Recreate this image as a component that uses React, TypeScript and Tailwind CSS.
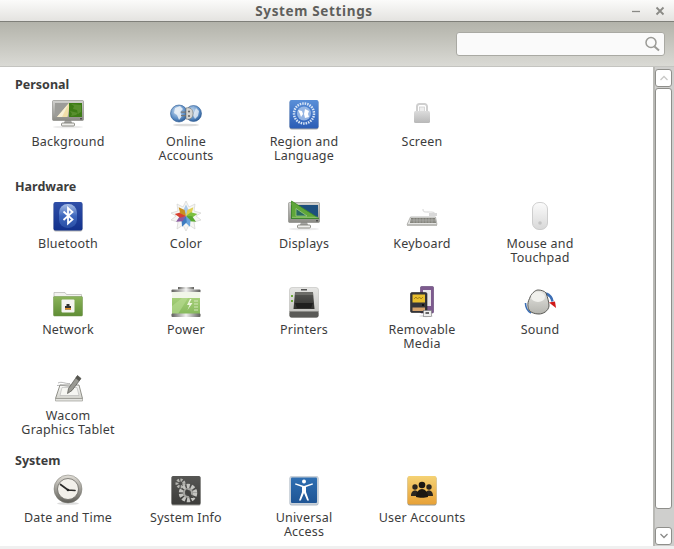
import { ReactNode } from "react";

const Monitor = ({ id, children }: { id: string; children: ReactNode }) => (
  <svg width="32" height="32" viewBox="0 0 32 32">
    <defs>
      <linearGradient id={id} x1="0" y1="0" x2="0" y2="1">
        <stop offset="0" stopColor="#d2d2cf" />
        <stop offset="1" stopColor="#8a8a84" />
      </linearGradient>
    </defs>
    <ellipse cx="16" cy="29" rx="15" ry="1.300" fill="#ececec" />
    <path d="M13 22h6l1 3h-8z" fill="#a5a5a2" />
    <rect x="9.500" y="25" width="13" height="3" rx="1" fill="#eeeeec" stroke="#77776f" strokeWidth="0.8" />
    <rect x="0.500" y="2.500" width="31" height="20" rx="1" fill={`url(#${id})`} stroke="#85857f" strokeWidth="0.6" />
    {children}
    <rect x="28" y="20.300" width="2" height="1" fill="#333" />
  </svg>
);

const BackgroundIcon = () => (
  <Monitor id="bgm">
    <rect x="3" y="5" width="14" height="14" fill="#9c9c98" />
    <rect x="17" y="5" width="13" height="14" fill="#3d7c16" />
    <path d="M19 6l3 2-1 3 4 1 1 4 3-2V7zM18 13l2 3-1 2 5-1 2-2z" fill="#588f2e" />
    <path d="M17 5c.300 5-.300 10-1.500 14H5z" fill="#f1dfa8" />
    <path d="M17 5L5 19h5z" fill="#f8f0d4" />
  </Monitor>
);

const OnlineIcon = () => (
  <svg width="32" height="32" viewBox="0 0 32 32">
    <defs>
      <radialGradient id="oa1" cx="0.4" cy="0.35" r="0.75">
        <stop offset="0" stopColor="#cfe0f2" />
        <stop offset="0.6" stopColor="#5e8fc6" />
        <stop offset="1" stopColor="#1d4c86" />
      </radialGradient>
    </defs>
    <ellipse cx="16" cy="27" rx="13" ry="1.300" fill="#dcdcdc" />
    <circle cx="9" cy="15.500" r="8.500" fill="url(#oa1)" stroke="#2c5a94" strokeWidth="0.6" />
    <circle cx="23.500" cy="15.500" r="8" fill="url(#oa1)" stroke="#2c5a94" strokeWidth="0.6" />
    <path d="M5 10l5-2 3 3-3 3 2 4-3 4-2-5-3-2z" fill="#eef3f8" opacity="0.85" />
    <path d="M26 10l3 3-1 5-3 3-2-4z" fill="#eef3f8" opacity="0.75" />
    <path d="M11 13.500h6v1.300h-6zM11 17h6v1.300h-6z" fill="#777" />
    <path d="M16 10c4-1 7 1 7 5.500s-3 6.500-7 5.500z" fill="#d5d5d2" stroke="#6f6f6c" strokeWidth="0.6" />
    <circle cx="19" cy="13.500" r="1.100" fill="#666" />
    <circle cx="19" cy="18" r="1.100" fill="#666" />
  </svg>
);

const RegionIcon = () => (
  <svg width="32" height="32" viewBox="0 0 32 32">
    <defs>
      <linearGradient id="rg1" x1="0" y1="0" x2="0" y2="1">
        <stop offset="0" stopColor="#5a8fd8" />
        <stop offset="1" stopColor="#2a5cb5" />
      </linearGradient>
    </defs>
    <rect x="1.500" y="2.500" width="29" height="29" rx="2" fill="#a8a8a8" />
    <rect x="1.500" y="2" width="29" height="28.500" rx="2" fill="url(#rg1)" />
    <circle cx="16" cy="15.500" r="10" fill="none" stroke="#d8e5f6" strokeWidth="2.500" strokeDasharray="1.500 1" />
    <circle cx="16" cy="15.500" r="7" fill="#a9c4ea" opacity="0.8" />
    <path d="M10 12l4 1 1 3-2 3-1-3zM17 11l4 2-1 3 1 3-4 1-1-4z" fill="#fff" />
  </svg>
);

const ScreenIcon = () => (
  <svg width="32" height="32" viewBox="0 0 32 32">
    <defs>
      <linearGradient id="sc1" x1="0" y1="0" x2="0" y2="1">
        <stop offset="0" stopColor="#dcdcdc" />
        <stop offset="1" stopColor="#b8b8b8" />
      </linearGradient>
    </defs>
    <path d="M11 14V8.500a2.500 2.500 0 0 1 2.500-2.500h5A2.500 2.500 0 0 1 21 8.500V14" fill="none" stroke="#cfcfcf" strokeWidth="2" />
    <rect x="13.500" y="9" width="5" height="4.500" fill="#ededed" stroke="#cfcfcf" strokeWidth="0.8" />
    <rect x="8" y="13" width="16" height="12" rx="1.500" fill="url(#sc1)" />
  </svg>
);

const BluetoothIcon = () => (
  <svg width="32" height="32" viewBox="0 0 32 32">
    <defs>
      <linearGradient id="bt1" x1="0" y1="0" x2="0" y2="1">
        <stop offset="0" stopColor="#2f4fa8" />
        <stop offset="1" stopColor="#12318c" />
      </linearGradient>
      <linearGradient id="bt2" x1="0" y1="0" x2="0" y2="1">
        <stop offset="0" stopColor="#a9bfe6" />
        <stop offset="0.5" stopColor="#3d66bd" />
        <stop offset="1" stopColor="#2a4fa5" />
      </linearGradient>
    </defs>
    <rect x="1.500" y="2.500" width="29" height="29" rx="2" fill="#b5b5b5" />
    <rect x="1.500" y="2" width="29" height="28.500" rx="2" fill="url(#bt1)" />
    <rect x="7" y="4" width="18" height="24" rx="8.500" fill="url(#bt2)" />
    <path d="M11.500 11.500l9 8-4.500 4V8l4.500 4-9 8" fill="none" stroke="#fff" strokeWidth="1.800" />
  </svg>
);

const ColorIcon = () => {
  // petals clockwise from the top
  const colors = ["#a9c8e8", "#e0d050", "#7cc040", "#58a830", "#6aa5dc", "#3e7cc0", "#8a5aa0", "#d84030", "#c89020"];
  return (
    <svg width="32" height="32" viewBox="0 0 32 32">
      <path
        d="M16 1l3 6 6-3-1 7 7 2-5 3 5 4-7 2 1 7-6-4-3 6-3-6-6 4 1-7-7-2 5-4-5-3 7-2-1-7 6 3z"
        fill="#f6f6f4"
        stroke="#cfcfcb"
        strokeWidth="0.6"
      />
      {colors.map((c, i) => (
        <path key={i} d="M16 16l-2.800-5.500L16 4.500l2.800 6z" fill={c} transform={`rotate(${i * 40} 16 16)`} />
      ))}
    </svg>
  );
};

const DisplaysIcon = () => (
  <Monitor id="dpm">
    <rect x="3" y="5" width="27" height="14" fill="#1d4f7d" />
    <path d="M3.500 1L31 18.500H3.500z" fill="#5fa63a" stroke="#3e8a22" strokeWidth="0.8" />
    <path d="M8 8.500l11 7.500H8z" fill="#2a6a60" stroke="#a9d48a" strokeWidth="0.7" />
    <path d="M4 17.300h26" stroke="#bfe0a0" strokeWidth="0.5" />
  </Monitor>
);

const KeyboardIcon = () => (
  <svg width="32" height="32" viewBox="0 0 32 32">
    <path d="M17 9c0 3 1 3 5 3s7 0 7 2" fill="none" stroke="#c9c9c9" strokeWidth="0.8" />
    <path d="M23 13h8v3h-8z" fill="#d8d8d8" />
    <path d="M4.500 17h25l1.500 7.500H1z" fill="#e4e4e2" stroke="#8e8e8a" strokeWidth="0.6" />
    <path d="M5 18h24l1 5H4z" fill="#77776f" />
    <path d="M5 19.300h24M4.700 20.600h24.600M4.400 21.900h25.200M8 18v5M11 18v5M14 18v5M17 18v5M20 18v5M23 18v5M26 18v5" stroke="#c8c8c4" strokeWidth="0.45" />
    <rect x="1" y="24.500" width="30" height="1.500" fill="#bcbcb8" />
  </svg>
);

const MouseIcon = () => (
  <svg width="32" height="32" viewBox="0 0 32 32">
    <defs>
      <linearGradient id="ms1" x1="0" y1="0" x2="0" y2="1">
        <stop offset="0" stopColor="#fbfbfb" />
        <stop offset="1" stopColor="#d8d8d8" />
      </linearGradient>
    </defs>
    <rect x="8.500" y="2.500" width="15" height="27" rx="6.500" fill="url(#ms1)" stroke="#c4c4c4" strokeWidth="0.8" />
    <circle cx="16" cy="23" r="1.800" fill="#c4c4c4" />
  </svg>
);

const NetworkIcon = () => (
  <svg width="32" height="32" viewBox="0 0 32 32">
    <defs>
      <linearGradient id="nw1" x1="0" y1="0" x2="0" y2="1">
        <stop offset="0" stopColor="#8bb45a" />
        <stop offset="1" stopColor="#5f8d35" />
      </linearGradient>
    </defs>
    <path d="M2 12V6.500h11l1.500 2h15V12z" fill="#f2f2ef" stroke="#b5b5b0" strokeWidth="0.7" />
    <rect x="1.500" y="10.500" width="29" height="19.500" rx="1" fill="url(#nw1)" stroke="#6b8f45" strokeWidth="0.5" />
    <rect x="9.500" y="13.500" width="13" height="13" rx="1" fill="#f4f4f0" />
    <path d="M13 20h6v3.500h-6zM14.500 18h3v2h-3z" fill="#333" />
    <rect x="13" y="22" width="6" height="1.500" fill="#e28b1e" />
  </svg>
);

const PowerIcon = () => (
  <svg width="32" height="32" viewBox="0 0 32 32">
    <defs>
      <linearGradient id="pw1" x1="0" y1="0" x2="0" y2="1">
        <stop offset="0" stopColor="#a5cf78" />
        <stop offset="1" stopColor="#86b95c" />
      </linearGradient>
      <linearGradient id="pw2" x1="0" y1="0" x2="1" y2="0">
        <stop offset="0" stopColor="#5f5f5c" />
        <stop offset="0.5" stopColor="#f0f0ee" />
        <stop offset="1" stopColor="#5f5f5c" />
      </linearGradient>
    </defs>
    <rect x="8" y="1" width="16" height="2.500" fill="url(#pw2)" />
    <rect x="1.500" y="3.500" width="29" height="3" rx="1" fill="url(#pw2)" />
    <rect x="2" y="6" width="28" height="22" fill="#f1f6e8" />
    <rect x="2" y="12" width="28" height="16" fill="url(#pw1)" />
    <path d="M2 20l10-8h6L8 28H2z" fill="#b9dc92" opacity="0.6" />
    <path d="M20 13l-3 6h2.500l-2 5 5-7h-3l2-4z" fill="#eef6df" />
    <path d="M24 15h4M24 18h4M24 21h4M24 24h4" stroke="#e4f0d0" strokeWidth="0.8" />
    <rect x="1.500" y="27.500" width="29" height="3.500" rx="1" fill="url(#pw2)" />
  </svg>
);

const PrintersIcon = () => (
  <svg width="32" height="32" viewBox="0 0 32 32">
    <defs>
      <linearGradient id="pr1" x1="0" y1="0" x2="0" y2="1">
        <stop offset="0" stopColor="#e6e6e4" />
        <stop offset="1" stopColor="#bdbdb9" />
      </linearGradient>
      <linearGradient id="pr2" x1="0" y1="0" x2="0" y2="1">
        <stop offset="0" stopColor="#575754" />
        <stop offset="1" stopColor="#2f2f2d" />
      </linearGradient>
    </defs>
    <rect x="1.500" y="1.500" width="29" height="30" rx="2.500" fill="url(#pr1)" stroke="#b4b4b0" strokeWidth="0.5" />
    <rect x="13" y="3" width="6" height="1.500" fill="#555" />
    <path d="M7 6h18l1.500 17h-21z" fill="url(#pr2)" />
    <path d="M7 6h18v3H7z" fill="#6c6c68" />
    <path d="M7 17h18l-2 5H9z" fill="#1f1f1e" />
    <rect x="3" y="9" width="2" height="2" fill="#6ea93a" />
    <rect x="3" y="14" width="2" height="2" fill="#6ea93a" />
    <rect x="1.500" y="25" width="29" height="6.500" rx="2" fill="#5a5a57" />
    <rect x="1.500" y="25" width="29" height="1" fill="#8a8a86" />
  </svg>
);

const RemovableIcon = () => (
  <svg width="32" height="32" viewBox="0 0 32 32">
    <ellipse cx="20" cy="30" rx="7" ry="1.200" fill="#ddd" />
    <rect x="14.500" y="0.500" width="13" height="26.500" rx="1" fill="#7d5a8e" stroke="#5d4070" strokeWidth="0.6" />
    <rect x="17" y="4" width="8" height="16" fill="#e8e4e8" />
    <rect x="4.500" y="6.500" width="16.500" height="20" rx="1.500" fill="#34343a" stroke="#222" strokeWidth="0.6" />
    <rect x="6.500" y="8.500" width="12.500" height="8" fill="#e9bf2e" />
    <path d="M8 13l2-2 1.500 2 2-2 1.500 2 2-2" stroke="#8a6a10" strokeWidth="0.7" fill="none" />
    <rect x="6.500" y="21.500" width="12.500" height="3.500" fill="#d4a26c" />
    <rect x="16" y="18" width="2" height="2" fill="#111" />
    <rect x="17.500" y="24.500" width="8" height="6" fill="#efefef" stroke="#777" strokeWidth="0.6" />
    <rect x="19.500" y="26" width="3.500" height="2" fill="#666" />
  </svg>
);

const SoundIcon = () => (
  <svg width="32" height="32" viewBox="0 0 32 32">
    <defs>
      <linearGradient id="sd1" x1="0" y1="0" x2="0" y2="1">
        <stop offset="0" stopColor="#e6e6e2" />
        <stop offset="1" stopColor="#b4b4ae" />
      </linearGradient>
    </defs>
    <path d="M1.500 17C1.500 22 3.500 25 7 27" fill="none" stroke="#3c6eb4" strokeWidth="1.600" />
    <path d="M22 7.500c3.500 1.500 6 4.500 6.500 8" fill="none" stroke="#3c6eb4" strokeWidth="2.500" />
    <path d="M25 16.500l6-1 1 6.500z" fill="#d01818" />
    <path d="M5.500 12.500C7 8 11 4 14 4s6.500 1 8 3c1.500 4 3 9 3 13-.5 5-6 8-10 8-5 0-10.500-2-11-7-.5-3 .2-6 1.500-8.500z" fill="url(#sd1)" stroke="#4a4a45" strokeWidth="0.9" />
    <ellipse cx="14" cy="11" rx="7" ry="5" fill="#f0f0ec" />
  </svg>
);

const WacomIcon = () => (
  <svg width="32" height="32" viewBox="0 0 32 32">
    <defs>
      <linearGradient id="wc1" x1="0" y1="0" x2="0" y2="1">
        <stop offset="0" stopColor="#fbfbf9" />
        <stop offset="1" stopColor="#d2d2cc" />
      </linearGradient>
    </defs>
    <path d="M8 13h19l3.500 13.500h-27z" fill="url(#wc1)" stroke="#77776f" strokeWidth="0.8" />
    <path d="M3.500 26.500h27v2.500h-27z" fill="#e4e4e0" stroke="#8f8f88" strokeWidth="0.6" />
    <path d="M10 15.500h15l2 8H8z" fill="#f6f6f2" stroke="#aaa" strokeWidth="0.5" />
    <path d="M6 11c4-2 7 1 12 .5M5 13.500c5-1 9 1 13 1" fill="none" stroke="#888" strokeWidth="0.6" />
    <path d="M25.500 3.500l3.500 3-9 12-4.500 3 1-5z" fill="#9a9a94" stroke="#55554f" strokeWidth="0.7" />
    <path d="M25.500 3.500l3.500 3-2 2.500-3.500-3z" fill="#55554f" />
  </svg>
);

const ClockIcon = () => (
  <svg width="32" height="32" viewBox="0 0 32 32">
    <defs>
      <linearGradient id="ck1" x1="0" y1="0" x2="0" y2="1">
        <stop offset="0" stopColor="#e2dfd8" />
        <stop offset="1" stopColor="#5f5e58" />
      </linearGradient>
    </defs>
    <ellipse cx="16" cy="29.500" rx="11" ry="1.300" fill="#ddd" />
    <circle cx="16" cy="15" r="14" fill="url(#ck1)" stroke="#77766f" strokeWidth="0.5" />
    <circle cx="16" cy="15" r="10.500" fill="#f2f0ea" stroke="#6b6a64" strokeWidth="0.8" />
    <path d="M16 16L8.500 10.500M16 16l7 .5" stroke="#2c2c2a" strokeWidth="1.700" strokeLinecap="round" />
    <circle cx="16" cy="16" r="1.300" fill="#222" />
  </svg>
);

const SystemInfoIcon = () => (
  <svg width="32" height="32" viewBox="0 0 32 32">
    <defs>
      <linearGradient id="si1" x1="0" y1="0" x2="0" y2="1">
        <stop offset="0" stopColor="#565654" />
        <stop offset="1" stopColor="#3c3c3a" />
      </linearGradient>
    </defs>
    <rect x="1.500" y="2.500" width="29" height="29" rx="1.500" fill="#9a9a96" />
    <rect x="1.500" y="2" width="29" height="28.500" rx="1.500" fill="url(#si1)" />
    <circle cx="18" cy="19" r="7" fill="none" stroke="#c4c4c0" strokeWidth="4.500" strokeDasharray="3 1.500" />
    <circle cx="18" cy="19" r="5" fill="#a5a5a1" />
    <circle cx="18" cy="19" r="3" fill="#4a4a48" />
    <circle cx="10.500" cy="9.500" r="3.500" fill="none" stroke="#b5b5b0" strokeWidth="3" strokeDasharray="2 1.200" />
    <path d="M17 15l7 9h-4l-5-7z" fill="#444442" />
  </svg>
);

const UniversalIcon = () => (
  <svg width="32" height="32" viewBox="0 0 32 32">
    <defs>
      <linearGradient id="ua1" x1="0" y1="0" x2="0" y2="1">
        <stop offset="0" stopColor="#2f6fb2" />
        <stop offset="1" stopColor="#1f5595" />
      </linearGradient>
    </defs>
    <rect x="1.500" y="2.500" width="29" height="29" rx="2" fill="#b0bac6" />
    <rect x="1.500" y="2" width="29" height="28.500" rx="2" fill="#c8d0d8" />
    <rect x="3" y="3.500" width="26" height="25.500" rx="1" fill="url(#ua1)" />
    <circle cx="16" cy="7.500" r="2" fill="#fff" />
    <path d="M7 10.500l7 2.500v5l-3 8.500h1.800L16 19l3.200 7.500H21l-3-8.500v-5l7-2.500-.5-1.300L16 12 7.500 9.200z" fill="#fff" />
  </svg>
);

const UsersIcon = () => (
  <svg width="32" height="32" viewBox="0 0 32 32">
    <defs>
      <linearGradient id="us1" x1="0" y1="0" x2="0" y2="1">
        <stop offset="0" stopColor="#f5d274" />
        <stop offset="1" stopColor="#e7a137" />
      </linearGradient>
    </defs>
    <rect x="1.500" y="2.500" width="29" height="29" rx="2" fill="#9a9a92" />
    <rect x="1.500" y="2" width="29" height="28.500" rx="2" fill="url(#us1)" />
    <circle cx="9" cy="13" r="2.700" fill="#2a2620" />
    <circle cx="23" cy="13" r="2.700" fill="#2a2620" />
    <path d="M5 22c0-4 2-5.500 4-5.500s4 1.500 4 5.500zM19 22c0-4 2-5.500 4-5.500s4 1.500 4 5.500z" fill="#2a2620" />
    <circle cx="16" cy="11" r="3.300" fill="#1a1712" />
    <path d="M10 23c0-5 3-8 6-8s6 3 6 8c-3 1-9 1-12 0z" fill="#1a1712" />
  </svg>
);

type Item = { icon: ReactNode; label: string };

const sections: { title: string; items: Item[] }[] = [
  {
    title: "Personal",
    items: [
      { icon: <BackgroundIcon />, label: "Background" },
      { icon: <OnlineIcon />, label: "Online\nAccounts" },
      { icon: <RegionIcon />, label: "Region and\nLanguage" },
      { icon: <ScreenIcon />, label: "Screen" },
    ],
  },
  {
    title: "Hardware",
    items: [
      { icon: <BluetoothIcon />, label: "Bluetooth" },
      { icon: <ColorIcon />, label: "Color" },
      { icon: <DisplaysIcon />, label: "Displays" },
      { icon: <KeyboardIcon />, label: "Keyboard" },
      { icon: <MouseIcon />, label: "Mouse and\nTouchpad" },
      { icon: <NetworkIcon />, label: "Network" },
      { icon: <PowerIcon />, label: "Power" },
      { icon: <PrintersIcon />, label: "Printers" },
      { icon: <RemovableIcon />, label: "Removable\nMedia" },
      { icon: <SoundIcon />, label: "Sound" },
      { icon: <WacomIcon />, label: "Wacom\nGraphics Tablet" },
    ],
  },
  {
    title: "System",
    items: [
      { icon: <ClockIcon />, label: "Date and Time" },
      { icon: <SystemInfoIcon />, label: "System Info" },
      { icon: <UniversalIcon />, label: "Universal\nAccess" },
      { icon: <UsersIcon />, label: "User Accounts" },
    ],
  },
];

export default function App() {
  return (
    <div className="flex h-[549px] w-[674px] flex-col overflow-hidden bg-[#f2f1f0] font-['Noto_Sans',sans-serif] text-[12.5px] leading-[14px] text-[#3c3c3c]">
      {/* title bar */}
      <div className="flex h-[22px] shrink-0 items-center border-b border-[#7f7f79] bg-gradient-to-b from-[#fbfbfa] to-[#e4e3e0]">
        <div className="flex-1 text-center text-[13.5px] font-bold tracking-[0.65px] text-[#5f5f5c]">
          System Settings
        </div>
        <div className="flex w-[46px] items-center gap-[14px] pl-[3px]">
          <svg width="10" height="10" viewBox="0 0 10 10">
            <path d="M1 5.500h8" stroke="#8a8a86" strokeWidth="1.300" />
          </svg>
          <svg width="10" height="10" viewBox="0 0 10 10">
            <path d="M1.500 1.500l7 7M8.500 1.500l-7 7" stroke="#8a8a86" strokeWidth="1.800" />
          </svg>
        </div>
      </div>

      {/* toolbar */}
      <div className="flex h-[45px] shrink-0 items-center justify-end border-b border-[#c4c4c0] bg-gradient-to-b from-[#b3b3aa] to-[#dadad5] pr-[9px]">
        <div className="flex h-[24px] w-[209px] items-center justify-end rounded-[3px] border border-[#a9a9a3] bg-[#fafafa] pr-[3px]">
          <svg width="18" height="18" viewBox="0 0 18 18">
            <circle cx="8" cy="7.500" r="5" fill="none" stroke="#9a9a96" strokeWidth="1.500" />
            <path d="M11.500 11.500l4.500 4" stroke="#9a9a96" strokeWidth="2" />
          </svg>
        </div>
      </div>

      <div className="flex min-h-0 flex-1">
        {/* icon grid */}
        <div className="flex-1 bg-white pl-[9px] pt-[10px]">
          {sections.map((s) => (
            <section key={s.title} className="mb-[17px]">
              <h2 className="h-[14px] pl-[6px] text-[12.5px] font-bold leading-[16px] text-[#3c3c3c]">{s.title}</h2>
              <div className="mt-[7px] grid grid-cols-[repeat(5,118px)] gap-y-[22px]">
                {s.items.map((item) => (
                  <div key={item.label} className="flex h-[64px] flex-col items-center">
                    <div className="h-[32px] w-[32px]">{item.icon}</div>
                    <div className="mt-[5px] whitespace-pre-line text-center tracking-[0.2px]">{item.label}</div>
                  </div>
                ))}
              </div>
            </section>
          ))}
        </div>

        {/* scrollbar */}
        <div className="flex w-[21px] shrink-0 flex-col border-l-2 border-[#b9b9b5] bg-[#cfcfcd] pr-[2px] pt-[2px]">
          <div className="flex h-[18px] items-center justify-center rounded-[3px] border border-[#8f8f8b] bg-white">
            <svg width="10" height="8" viewBox="0 0 10 8">
              <path d="M1.500 6L5 2.500 8.500 6" fill="none" stroke="#c9c9c7" strokeWidth="1.300" />
            </svg>
          </div>
          <div className="mt-[1px] h-[421px] rounded-[3px] border border-[#8f8f8b] bg-white" />
          <div className="mt-[18px] flex h-[18px] items-center justify-center rounded-[3px] border border-[#8f8f8b] bg-white">
            <svg width="10" height="8" viewBox="0 0 10 8">
              <path d="M1.500 2L5 5.500 8.500 2" fill="none" stroke="#8a8a88" strokeWidth="1.300" />
            </svg>
          </div>
        </div>
      </div>

      {/* bottom edge */}
      <div className="h-[3px] shrink-0 bg-[#f0f0f0]" />
    </div>
  );
}
